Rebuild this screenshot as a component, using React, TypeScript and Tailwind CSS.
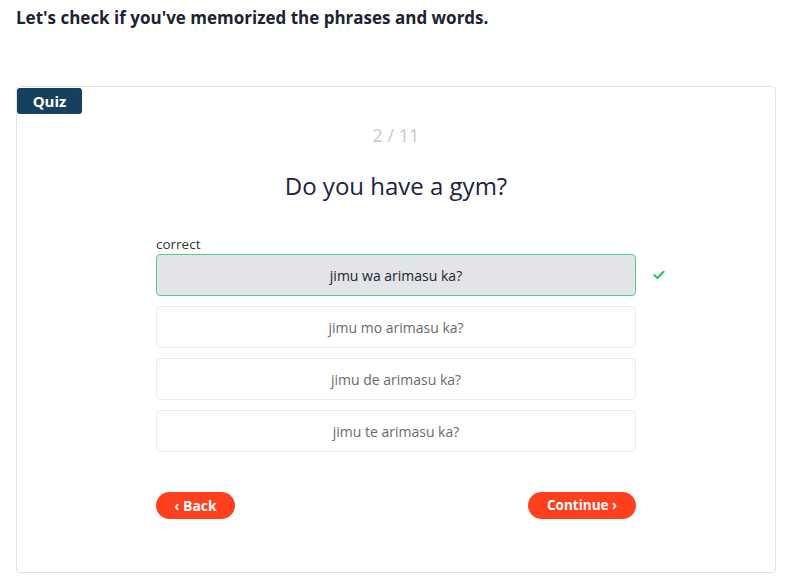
import React, { useState } from 'react';

const options = [
  'jimu wa arimasu ka?',
  'jimu mo arimasu ka?',
  'jimu de arimasu ka?',
  'jimu te arimasu ka?',
];

const CheckIcon = () => (
  <svg width="12" height="10" viewBox="0 0 12 10" fill="none">
    <path d="M1.5 5.2 L4.5 8 L10.5 1.8" stroke="#2fc26b" strokeWidth="2.2" strokeLinecap="round" strokeLinejoin="round" />
  </svg>
);

const App: React.FC = () => {
  const [selected] = useState(0);

  return (
    <div className="min-h-[582px] bg-white px-4 pt-[7px] text-[#1d2333]" style={{ fontFamily: "'Open Sans', 'Noto Sans', sans-serif" }}>
      <h1 className="text-[17px] font-bold leading-[22px] text-[#1d2333]">
        Let's check if you've memorized the phrases and words.
      </h1>

      <div className="relative mt-[57px] h-[487px] w-[760px] rounded-[4px] border border-[#e4e4e4] bg-white">
        <div className="absolute left-0 top-[1px] flex h-[26px] w-[65px] items-center justify-center rounded-[3px] bg-[#15405e] text-[15px] font-bold text-white">
          Quiz
        </div>

        <div className="flex flex-col items-center">
          <div className="mt-[35px] text-[18px] leading-[26px] text-[#c9c9c9]">2 / 11</div>
          <div className="mt-[22px] text-[24px] leading-[32px] text-[#1d2340]">Do you have a gym?</div>

          <div className="mt-[34px] w-[480px]">
            <div className="mb-[2px] text-[13.5px] leading-[16px] text-[#333]">correct</div>
            <div className="flex flex-col gap-[10px]">
              {options.map((opt, i) => (
                <div key={opt} className="relative">
                  <button
                    className={
                      i === selected
                        ? 'flex h-[42px] w-full items-center justify-center rounded-[4px] border border-[#52d08a] bg-[#e3e4e8] text-[14px] text-[#1d2333]'
                        : 'flex h-[42px] w-full items-center justify-center rounded-[4px] border border-[#ececec] bg-white text-[14px] text-[#6b6b6b]'
                    }
                  >
                    {opt}
                  </button>
                  {i === selected && (
                    <span className="absolute left-[497px] top-[16px]">
                      <CheckIcon />
                    </span>
                  )}
                </div>
              ))}
            </div>

            <div className="mt-[40px] flex items-center justify-between">
              <button className="flex h-[27px] w-[79px] items-center justify-center rounded-full bg-[#ff401f] text-[14px] font-bold text-white">
                ‹ Back
              </button>
              <button className="flex h-[27px] w-[108px] items-center justify-center rounded-full bg-[#ff401f] text-[13.5px] font-bold text-white">
                Continue ›
              </button>
            </div>
          </div>
        </div>
      </div>
    </div>
  );
};

export default App;
